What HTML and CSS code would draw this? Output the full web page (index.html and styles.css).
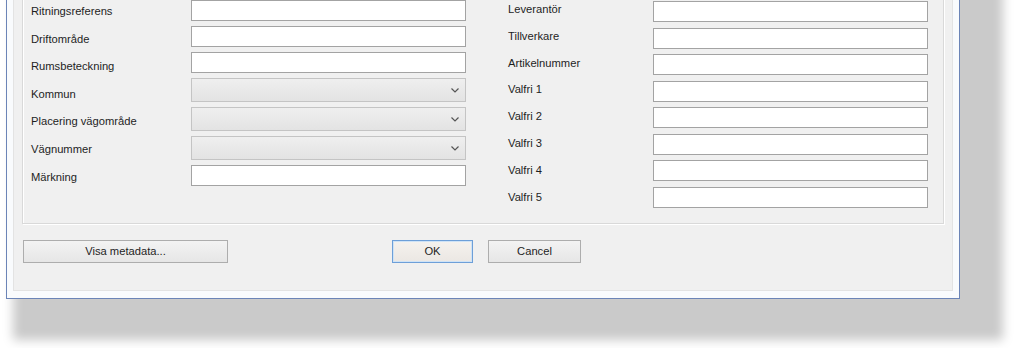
FILE: index.html
```html
<!DOCTYPE html>
<html lang="sv">
<head>
    <meta charset="UTF-8">
    <meta name="viewport" content="width=device-width, initial-scale=1.0">
    <title>Egenskaper</title>
    <link rel="stylesheet" href="styles.css">
</head>
<body>
    <div class="dialog">
        <div class="client">
            <div class="group">
                <div class="block block-left">
                    <div class="labels labels-left">
                        <span>Ritningsreferens</span>
                        <span>Driftområde</span>
                        <span>Rumsbeteckning</span>
                        <span>Kommun</span>
                        <span>Placering vägområde</span>
                        <span>Vägnummer</span>
                        <span>Märkning</span>
                    </div>
                    <div class="fields fields-left">
                        <input type="text">
                        <input type="text">
                        <input type="text">
                        <div class="combo"><svg width="8" height="5" viewBox="0 0 8 5"><polyline points="0.5,0.5 4,4 7.5,0.5" fill="none" stroke="#555" stroke-width="1.2"/></svg></div>
                        <div class="combo"><svg width="8" height="5" viewBox="0 0 8 5"><polyline points="0.5,0.5 4,4 7.5,0.5" fill="none" stroke="#555" stroke-width="1.2"/></svg></div>
                        <div class="combo"><svg width="8" height="5" viewBox="0 0 8 5"><polyline points="0.5,0.5 4,4 7.5,0.5" fill="none" stroke="#555" stroke-width="1.2"/></svg></div>
                        <input type="text">
                    </div>
                </div>
                <div class="block block-right">
                    <div class="labels labels-right">
                        <span>Leverantör</span>
                        <span>Tillverkare</span>
                        <span>Artikelnummer</span>
                        <span>Valfri 1</span>
                        <span>Valfri 2</span>
                        <span>Valfri 3</span>
                        <span>Valfri 4</span>
                        <span>Valfri 5</span>
                    </div>
                    <div class="fields fields-right">
                        <input type="text">
                        <input type="text">
                        <input type="text">
                        <input type="text">
                        <input type="text">
                        <input type="text">
                        <input type="text">
                        <input type="text">
                    </div>
                </div>
            </div>
            <div class="buttons">
                <button class="btn btn-meta">Visa metadata...</button>
                <button class="btn btn-ok">OK</button>
                <button class="btn btn-cancel">Cancel</button>
            </div>
        </div>
    </div>
</body>
</html>
```

FILE: styles.css
```css
body {
    margin: 0;
    padding: 0;
    background-color: #fff;
    font-family: "Liberation Sans", Arial, sans-serif;
    font-size: 11.2px;
    color: #1e1e1e;
    height: 348px;
    overflow: hidden;
}

.dialog {
    box-sizing: border-box;
    width: 954px;
    margin: -40px 0 0 6px;
    padding: 6px 6px 7px 6px;
    border: 1px solid #6b84b7;
    background-color: #f9fbfd;
    box-shadow: 25px 23px 10px 18px #cacaca;
}

.client {
    border: 1px solid #e3e3e3;
    background-color: #f0f0f0;
    padding: 0 8px 27px 8px;
}

.group {
    margin-top: 8px;
    border: 1px solid #d9d9d9;
    box-shadow: 1px 1px 0 #fff, inset 1px 1px 0 #fff;
    padding: 24px 15px 15px 8px;
    display: flex;
    align-items: flex-start;
}

.block {
    display: flex;
    align-items: flex-start;
}

.block-right {
    margin-left: 42px;
}

.labels {
    display: flex;
    flex-direction: column;
}

.labels-left {
    width: 160px;
    line-height: 27.6px;
    margin: -3px 0 -20px 0;
}

.labels-right {
    width: 145px;
    line-height: 26.8px;
    margin: -5px 0 -20px 0;
}

.fields {
    width: 275px;
    display: flex;
    flex-direction: column;
}

.fields-left {
    gap: 5px;
    margin-top: -1px;
}

.fields-right {
    gap: 5.57px;
}

input[type="text"] {
    box-sizing: border-box;
    width: 100%;
    height: 21px;
    margin: 0;
    border: 1px solid #a3a3a3;
    background-color: #fff;
}

.combo {
    box-sizing: border-box;
    height: 24px;
    border: 1px solid #c4c4c4;
    background: linear-gradient(#efefef, #e3e3e3);
    display: flex;
    justify-content: flex-end;
    align-items: center;
    padding-right: 6px;
}

.buttons {
    display: flex;
    margin-top: 16px;
}

.btn {
    box-sizing: border-box;
    height: 23px;
    margin: 0;
    padding: 0;
    font-family: "Liberation Sans", Arial, sans-serif;
    font-size: 11.2px;
    color: #1e1e1e;
    border: 1px solid #adadad;
    background: linear-gradient(#f3f3f3, #e6e6e6);
}

.btn-meta {
    width: 205px;
    margin-left: 1px;
}

.btn-ok {
    width: 81px;
    margin-left: 164px;
    border-color: #6d9fd8;
    box-shadow: inset 0 0 0 1px #cfe3f6;
    background: linear-gradient(#f5f2ee, #ebe7e3);
}

.btn-cancel {
    width: 93px;
    margin-left: 15px;
}
```
